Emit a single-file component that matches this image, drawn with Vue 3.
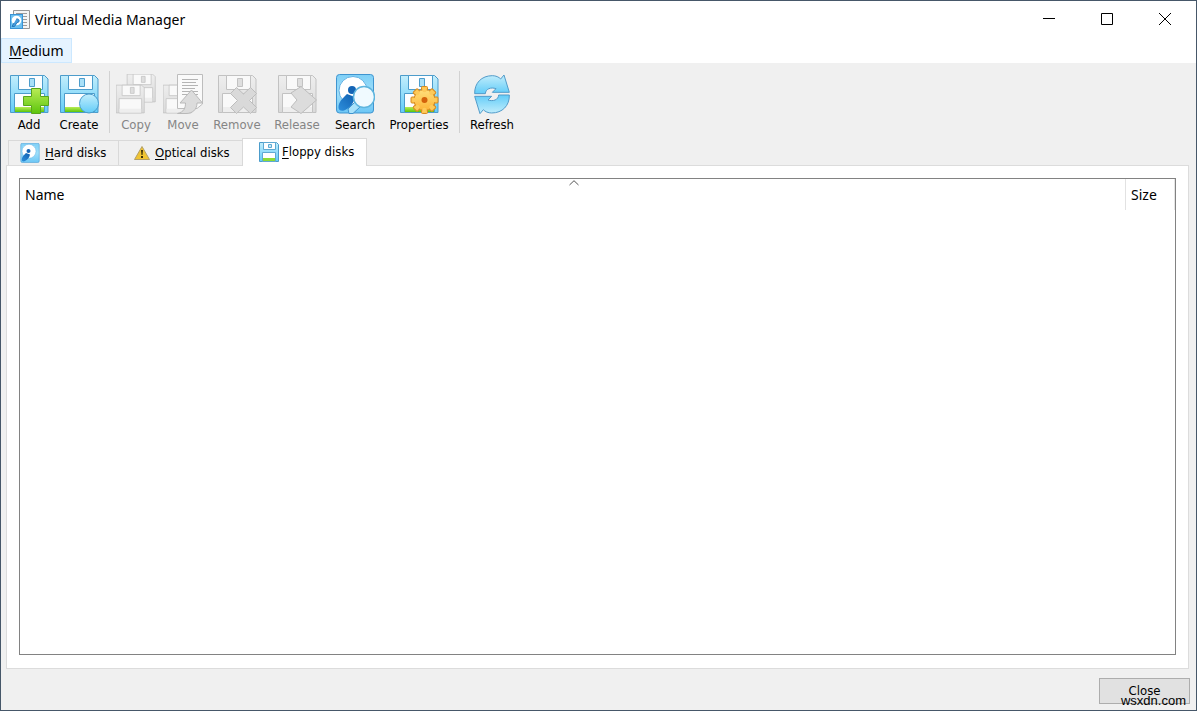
<script setup>
import { ref } from 'vue'

const palettes = [
  { id: 'color', body: 'url(#blue)', line: '#4c9ccb', paper: '#fdfeff', slot: '#a9e0f8', green: 'url(#green)' },
  { id: 'gray', body: 'url(#silver)', line: '#c2c2c2', paper: '#f9f9f9', slot: '#dedede', green: '#eeeeee' },
]

const groups = [
  [
    { label: 'Add', icon: 'add', size: 'w-small' },
    { label: 'Create', icon: 'create', size: 'w-small' },
  ],
  [
    { label: 'Copy', icon: 'copy', size: 'w-tiny', disabled: true },
    { label: 'Move', icon: 'move', size: 'w-mini', disabled: true },
    { label: 'Remove', icon: 'remove', size: 'w-large', disabled: true },
    { label: 'Release', icon: 'release', size: 'w-medium', disabled: true },
    { label: 'Search', icon: 'search', size: 'w-medium' },
    { label: 'Properties', icon: 'properties', size: 'w-wide' },
  ],
  [{ label: 'Refresh', icon: 'refresh', size: 'w-fresh' }],
]

const tabs = [
  { key: 'hard', first: 'H', rest: 'ard disks', icon: 'disk' },
  { key: 'optical', first: 'O', rest: 'ptical disks', icon: 'warning' },
  { key: 'floppy', first: 'F', rest: 'loppy disks', icon: 'floppy-tab' },
]
const active = ref('floppy')
</script>

<template>
  <div class="window">
    <svg class="defs" aria-hidden="true">
      <defs>
        <linearGradient id="blue" x1="0" y1="0" x2="0" y2="1">
          <stop offset="0" stop-color="#c3eefc" /><stop offset="1" stop-color="#62ccf8" />
        </linearGradient>
        <linearGradient id="green" x1="0" y1="0" x2="0" y2="1">
          <stop offset="0" stop-color="#b9ec55" /><stop offset="1" stop-color="#5cc50c" />
        </linearGradient>
        <linearGradient id="silver" x1="0" y1="0" x2="0" y2="1">
          <stop offset="0" stop-color="#eeeeee" /><stop offset="1" stop-color="#dadada" />
        </linearGradient>
        <linearGradient id="gold" x1="0" y1="0" x2="0" y2="1">
          <stop offset="0" stop-color="#ffdf7c" /><stop offset="1" stop-color="#fdb437" />
        </linearGradient>
        <linearGradient id="deep" x1="0" y1="0" x2="0" y2="1">
          <stop offset="0" stop-color="#7fd0f7" /><stop offset=".5" stop-color="#9fdffa" /><stop offset="1" stop-color="#6cc6f5" />
        </linearGradient>
        <linearGradient id="arm" x1="1" y1="0" x2="0" y2="1">
          <stop offset="0" stop-color="#0f5fb0" /><stop offset="1" stop-color="#2e8fdc" />
        </linearGradient>
        <symbol v-for="p in palettes" :id="'floppy-' + p.id" :key="p.id" viewBox="0 0 40 40">
          <path d="M1.5 1.5H35.5L39 5V38.5H1.5Z" :fill="p.body" :stroke="p.line" stroke-linejoin="round" />
          <path d="M9.5 1.5H33.5V15.5H9.5Z" :fill="p.paper" :stroke="p.line" />
          <path d="M20.5 4.5H25.5V12.5H20.5Z" :fill="p.slot" :stroke="p.line" />
          <path d="M5.5 19.5H35.5V38.5H5.5Z" :fill="p.paper" :stroke="p.line" />
          <path d="M6 33H35V38H6Z" :fill="p.green" />
        </symbol>
        <symbol id="disk" viewBox="0 0 40 40">
          <rect x="1.5" y=".5" width="37" height="38.500" rx="3" fill="url(#deep)" stroke="#3f94cf" />
          <circle cx="18" cy="16.500" r="14" fill="#fff" stroke="#62b2e4" />
          <path d="M12 20L20 23C19 29 15 34 9 36.500 6 37.500 3.500 36 3.500 33.500 3.500 28 7 25 12 20Z" fill="url(#arm)" />
          <circle cx="17" cy="16" r="4" fill="#1464b5" />
        </symbol>
      </defs>
    </svg>

    <header class="titlebar">
      <svg class="app-icon" viewBox="0 0 20 20" aria-hidden="true">
        <path d="M3.500.5H19.500V18.500H3.500Z" fill="#f5f5f5" stroke="#969696" />
        <path d="M6 3.500h11M13 6.500h4M13 9.500h4M13 12.500h4M13 15.500h4" stroke="#9b9b9b" />
        <rect x=".5" y="4.500" width="12" height="14" fill="#6cc0f0" stroke="#3993d5" />
        <circle cx="6.500" cy="10.500" r="4.800" fill="#fff" />
        <path d="M6 9.500a1.800 1.800 0 1 1 1 3L4.500 16.500H2L4 13" fill="#4a9ddd" stroke="#257abc" />
      </svg>
      <h1>Virtual Media Manager</h1>
      <div class="controls">
        <button type="button" aria-label="Minimize"><svg viewBox="0 0 12 12"><path d="M0 5.500H12" /></svg></button>
        <button type="button" aria-label="Maximize"><svg viewBox="0 0 12 12"><path d="M.5.5H11.500V11.500H.5Z" /></svg></button>
        <button type="button" aria-label="Close window"><svg viewBox="0 0 12 12"><path d="M0 0L12 12M12 0L0 12" /></svg></button>
      </div>
    </header>

    <nav class="menubar">
      <button type="button"><u>M</u>edium</button>
    </nav>

    <div class="toolbar" role="toolbar" aria-label="Medium actions">
      <div v-for="(group, g) in groups" :key="g" class="group">
        <button v-for="t in group" :key="t.icon" type="button" :class="['tool', t.size]" :disabled="t.disabled">
          <svg viewBox="0 0 40 40" aria-hidden="true">
            <template v-if="t.icon === 'add'">
              <use href="#floppy-color" width="40" height="40" />
              <path d="M22.500 14.500H31.500V22.500H39.500V31.500H31.500V39.500H22.500V31.500H14.500V22.500H22.500Z" fill="url(#green)" stroke="#58a51c" stroke-linejoin="round" />
            </template>
            <template v-else-if="t.icon === 'create'">
              <use href="#floppy-color" width="40" height="40" />
              <circle cx="30" cy="29.500" r="9.500" fill="url(#blue)" stroke="#4a9ccd" />
            </template>
            <template v-else-if="t.icon === 'copy'">
              <use href="#floppy-gray" x="10" y="-1" width="30" height="30" />
              <use href="#floppy-gray" x="-1" y="10" width="30" height="30" />
            </template>
            <template v-else-if="t.icon === 'move'">
              <use href="#floppy-gray" x="-1" y="10" width="30" height="30" />
              <path d="M14.500.5H39.500V30L34 34.500H14.500Z" fill="#fafafa" stroke="#bdbdbd" />
              <path d="M19 5.500H35M19 8.500H33M19 11.500H35M19 14.500H32M19 17.500H35M19 20.500H35" stroke="#b4b4b4" />
              <path d="M28.500 16L39.500 29H34C34 36 29 39.500 23 39.500H14.500C21 38 22.500 34 22.500 29H17Z" fill="#dcdcdc" stroke="#b9b9b9" />
            </template>
            <template v-else-if="t.icon === 'remove'">
              <use href="#floppy-gray" width="40" height="40" />
              <path d="M19.500 13.500L26.500 20 33.500 13.500 39.500 19.500 32.500 26.500 39.500 33.500 33.500 39.500 26.500 33 19.500 39.500 13.500 33.500 20.500 26.500 13.500 19.500Z" fill="#d9d9d9" stroke="#bdbdbd" />
            </template>
            <template v-else-if="t.icon === 'release'">
              <use href="#floppy-gray" width="40" height="40" />
              <path d="M24 12.500L39.500 26 24 39.500 14 33 20 26 14 19Z" fill="#dcdcdc" stroke="#bdbdbd" />
            </template>
            <template v-else-if="t.icon === 'search'">
              <use href="#disk" width="40" height="40" />
              <path d="M20 28L25 33 18 39.500H14L13 35Z" fill="#a9e2fa" stroke="#3f94cf" />
              <circle cx="29" cy="23" r="10.500" fill="#f0faff" stroke="#5fb5de" stroke-width="1.500" />
            </template>
            <template v-else-if="t.icon === 'properties'">
              <use href="#floppy-color" width="40" height="40" />
              <g transform="translate(25.500 26)">
                <g fill="#fdc550" stroke="#d78a20">
                  <rect v-for="n in 8" :key="n" x="-3" y="-13.500" width="6" height="6" rx="1" :transform="`rotate(${n * 45})`" />
                </g>
                <circle r="10.500" fill="url(#gold)" stroke="#d78a20" />
                <circle v-for="n in 8" :key="'c' + n" cy="-10" r="2.300" fill="#fdca5b" :transform="`rotate(${n * 45})`" />
                <circle r="3" fill="#d4620b" />
              </g>
            </template>
            <g v-else transform="scale(.3333) translate(-67 -23)" fill="url(#blue)" stroke="#519bc9" stroke-width="3" stroke-linejoin="round">
              <path id="swirl" d="M75 82C74 50 96 28 128 28C138 28 148 32 153 38L163 26 179 78H128L139 67C124 62 108 67 107 82Z" />
              <use href="#swirl" transform="rotate(180 127 84)" />
            </g>
          </svg>
          <span>{{ t.label }}</span>
        </button>
      </div>
    </div>

    <main>
      <div class="tabs" role="tablist">
        <button v-for="t in tabs" :key="t.key" type="button" role="tab" :class="t.key" :aria-selected="active === t.key" @click="active = t.key">
          <svg v-if="t.icon === 'disk'" viewBox="0 0 40 40" aria-hidden="true"><use href="#disk" width="40" height="40" /></svg>
          <svg v-else-if="t.icon === 'warning'" viewBox="0 0 20 20" aria-hidden="true">
            <path d="M10 3.500L17.500 16.500H2.500Z" fill="#f0c433" stroke="#b3a067" stroke-linejoin="round" />
            <path d="M9 7h2l-.5 5h-1ZM9 13h2v2H9Z" fill="#3a3008" />
          </svg>
          <svg v-else viewBox="0 0 20 20" aria-hidden="true">
            <path d="M.5.5H17.500L19.500 2.500V19.500H.5Z" fill="url(#blue)" stroke="#4c9ccb" />
            <path d="M4.500.5H16.500V7.500H4.500Z" fill="#fff" stroke="#5fa9d2" />
            <path d="M9.500 2.500H12.500V5.500H9.500Z" fill="#c4eafa" stroke="#5fa9d2" />
            <path d="M3.500 10.500H16.500V19.500H3.500Z" fill="#fff" stroke="#5fa9d2" />
            <path d="M4 16H16V19H4Z" fill="#8cdb36" />
          </svg>
          <span><u>{{ t.first }}</u>{{ t.rest }}</span>
        </button>
      </div>
      <section class="pane" role="tabpanel">
        <div class="list">
          <table>
            <thead>
              <tr><th scope="col">Name</th><th scope="col" class="size">Size</th></tr>
            </thead>
          </table>
          <svg class="sort" viewBox="0 0 10 6" aria-hidden="true"><path d="M.5 5L5 .7 9.500 5" /></svg>
        </div>
      </section>
    </main>

    <footer>
      <button type="button">Close</button>
      <span class="mark">wsxdn.com</span>
    </footer>
  </div>
</template>

<style>
body { margin: 0; }
</style>

<style scoped>
* { box-sizing: border-box; }
.window {
  min-height: 100vh;
  display: flex;
  flex-direction: column;
  border: 1px solid #465769;
  background: #f0f0f0;
  color: #000;
  font: 13px/16px "DejaVu Sans Condensed", "DejaVu Sans", sans-serif;
}
button { font: inherit; color: inherit; border: 0; margin: 0; padding: 0; background: none; }
svg { display: block; flex: none; }
u { text-underline-offset: 2px; }
.defs { width: 0; height: 0; position: absolute; }
.titlebar { display: flex; align-items: center; height: 37px; padding-left: 9px; background: #fff; }
.app-icon { width: 20px; height: 20px; }
h1 { flex: 1; margin: 0 0 0 5px; font: 14px/20px "Noto Sans", sans-serif; }
.controls { display: flex; align-self: flex-start; padding-right: 2px; }
.controls button { width: 58px; height: 36px; display: flex; align-items: center; justify-content: center; }
.controls svg { width: 12px; height: 12px; }
.controls path { fill: none; stroke: #000; }
.menubar { display: flex; height: 25px; background: #fff; }
.menubar button { height: 25px; padding: 1px 7px 0; border: 1px solid #cce8ff; background: #e5f3ff; font: 14px/22px "Noto Sans", sans-serif; }
.toolbar { display: flex; height: 74px; padding: 8px 3px 0; }
.group { display: flex; height: 62px; }
.group + .group { margin-left: 5px; border-left: 1px solid #d2d2d2; padding-left: 2px; }
.tool { display: flex; flex-direction: column; align-items: center; padding-top: 3px; }
.tool svg { width: 40px; height: 40px; margin-bottom: 3px; }
.tool:disabled { color: #858585; }
.w-mini { width: 46px; }
.w-tiny { width: 48px; }
.w-small { width: 50px; }
.w-medium { width: 58px; }
.w-fresh { width: 60px; }
.w-large { width: 62px; }
.w-wide { width: 70px; }
main { flex: 1; display: flex; flex-direction: column; padding: 0 7px 0 5px; }
.tabs { display: flex; align-items: flex-end; padding-left: 2px; height: 28px; }
.tabs button { display: flex; align-items: center; gap: 5px; height: 25px; border: 1px solid #d9d9d9; border-bottom: 0; }
.tabs svg { width: 20px; height: 20px; }
.tabs .hard { width: 110px; padding-left: 11px; border-right: 0; }
.tabs .optical { width: 124px; padding-left: 13px; gap: 3px; border-right: 0; }
.tabs .floppy { width: 125px; padding-left: 16px; gap: 3px; }
.tabs button[aria-selected="true"] { height: 28px; margin-bottom: -1px; padding-bottom: 1px; background: #fff; z-index: 1; }
.pane { flex: 1; display: flex; padding: 12px 12px 13px; border: 1px solid #dcdcdc; background: #fff; }
.list { flex: 1; position: relative; border: 1px solid #828282; }
table { width: 100%; border-collapse: collapse; table-layout: fixed; }
th { height: 31px; padding: 0 5px; text-align: left; font: 14px/20px "Noto Sans", sans-serif; }
.size { width: 49px; border-left: 1px solid #e2e2e2; border-right: 1px solid #e5e5e5; }
.sort { position: absolute; top: 1px; left: calc(50% - 29px); width: 10px; height: 6px; }
.sort path { fill: none; stroke: #555; }
footer { position: relative; display: flex; justify-content: flex-end; height: 41px; padding: 9px 6px 0; }
footer button { width: 91px; height: 26px; border: 1px solid #adadad; background: #e1e1e1; }
.mark { position: absolute; right: 10px; bottom: 1px; font: 13px/16px "Liberation Sans", sans-serif; }
</style>
